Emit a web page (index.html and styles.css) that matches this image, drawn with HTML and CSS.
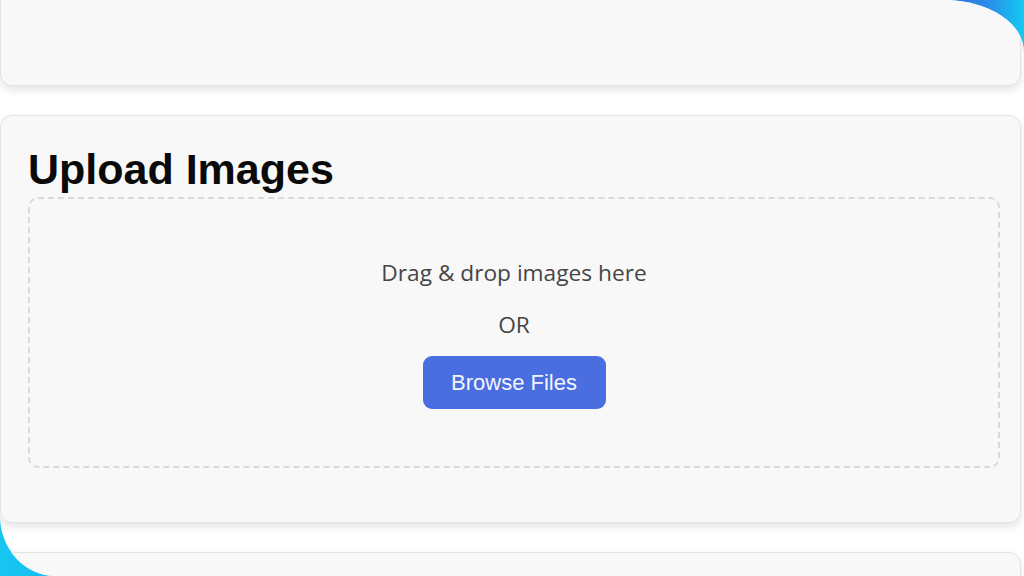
FILE: index.html
```html
<!DOCTYPE html>
<html lang="en">
<head>
<meta charset="utf-8">
<title>Upload Images</title>
<link rel="stylesheet" href="styles.css">
</head>
<body>
<div class="frame">
  <div class="panel">
    <section class="card card-top"></section>
    <section class="card card-upload">
      <h2 class="title">Upload Images</h2>
      <div class="dropzone">
        <p class="drop-text">Drag &amp; drop images here</p>
        <p class="or-text">OR</p>
        <button class="browse-btn" type="button">Browse Files</button>
      </div>
    </section>
    <section class="card card-bottom"></section>
  </div>
</div>
</body>
</html>
```
FILE: styles.css
```css
html, body {
  margin: 0;
  padding: 0;
}
body {
  width: 1024px;
  height: 576px;
  overflow: hidden;
  font-family: "Liberation Sans", Arial, sans-serif;
}
.frame {
  width: 1024px;
  height: 576px;
  background:
    linear-gradient(to right, #3562df 0%, #2a8de8 60%, #14caf2 100%) top right / 90px 60px no-repeat,
    linear-gradient(to right, #16c6f0, #1ab4ec) bottom left / 90px 80px no-repeat,
    #ffffff;
}
.panel {
  width: 1024px;
  height: 576px;
  background: #ffffff;
  border-top-right-radius: 80px 52px;
  border-bottom-left-radius: 56px 60px;
  overflow: hidden;
}
.card {
  box-sizing: border-box;
  width: 1021px;
  background: #f8f8f8;
  border: 1px solid #e3e3e3;
  border-radius: 12px;
  box-shadow: 0 4px 9px rgba(0, 0, 0, 0.11);
}
.card-top {
  height: 86px;
  border-top: none;
  border-top-left-radius: 0;
  border-top-right-radius: 0;
}
.card-upload {
  margin-top: 29px;
  height: 408px;
  padding: 28px 20px 0 27px;
}
.card-bottom {
  margin-top: 29px;
  height: 60px;
}
.title {
  margin: 0 0 3px;
  font-family: "Liberation Sans", Arial, sans-serif;
  font-weight: 700;
  font-size: 43px;
  line-height: 50px;
  color: #0a0a0a;
}
.dropzone {
  box-sizing: border-box;
  height: 271px;
  border: 2px dashed #d9d9d9;
  border-radius: 10px;
  display: flex;
  flex-direction: column;
  align-items: center;
  padding-top: 59px;
}
.drop-text, .or-text {
  margin: 0;
  font-family: "Open Sans", "Noto Sans", sans-serif;
  font-size: 22.7px;
  line-height: 30px;
  color: #454545;
}
.or-text {
  margin-top: 22px;
}
.browse-btn {
  margin-top: 16px;
  width: 183px;
  height: 53px;
  border: none;
  border-radius: 9px;
  background: #4a6ddf;
  color: #f2f5ff;
  font-family: "Liberation Sans", Arial, sans-serif;
  font-size: 22px;
  padding: 0;
}
```
